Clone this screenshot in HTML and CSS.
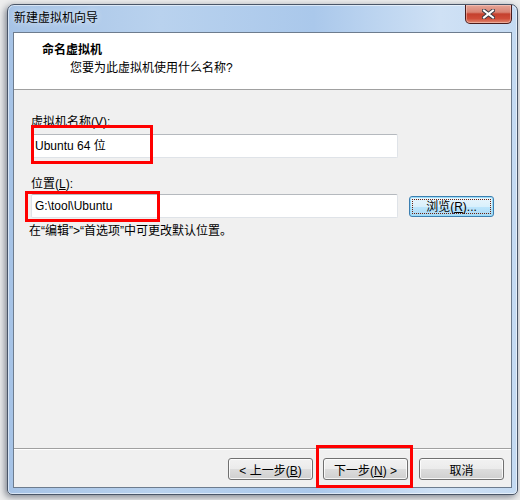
FILE: index.html
```html
<!DOCTYPE html>
<html lang="zh-CN">
<head>
<meta charset="UTF-8">
<title>新建虚拟机向导</title>
<link rel="stylesheet" href="styles.css">
</head>
<body>

<div class="window">
  <div class="titlebar">
    <span class="title">新建虚拟机向导</span>
    <button class="close" type="button">
      <svg width="13" height="10" viewBox="0 0 13 10">
        <path d="M2 1.5 L11 8.5 M11 1.5 L2 8.5" stroke="#3a3a44" stroke-width="4" stroke-linecap="square"/>
        <path d="M2 1.5 L11 8.5 M11 1.5 L2 8.5" stroke="#ffffff" stroke-width="2" stroke-linecap="square"/>
      </svg>
    </button>
  </div>

  <div class="client">
    <div class="header">
      <div class="head-title">命名虚拟机</div>
      <div class="head-sub">您要为此虚拟机使用什么名称?</div>
    </div>

    <div class="content">
      <label class="field-label first">虚拟机名称(<u>V</u>):</label>
      <div class="textbox">Ubuntu 64 位</div>

      <label class="field-label second">位置(<u>L</u>):</label>
      <div class="row">
        <div class="textbox">G:\tool\Ubuntu</div>
        <button class="btn browse" type="button"><span class="focus">浏览(<u>R</u>)...</span></button>
      </div>

      <p class="hint">在“编辑”&gt;“首选项”中可更改默认位置。</p>
    </div>

    <div class="footer">
      <button class="btn" type="button">&lt; 上一步(<u>B</u>)</button>
      <button class="btn" type="button">下一步(<u>N</u>) &gt;</button>
      <button class="btn cancel" type="button">取消</button>
    </div>
  </div>
</div>

<!-- red highlight boxes -->
<div class="mark mark-name"></div>
<div class="mark mark-path"></div>
<div class="mark mark-next"></div>

</body>
</html>
```

FILE: styles.css
```css
body {
  margin: 0;
  width: 520px;
  height: 500px;
  overflow: hidden;
  background: #eeeeee;
  font-family: "Liberation Sans", "Noto Sans CJK SC", sans-serif;
  font-size: 12px;
  color: #000;
  position: relative;
}

.window {
  box-sizing: border-box;
  width: 511px;
  height: 491px;
  margin: 4px 0 0 7px;
  padding: 0 5px 6px 5px;
  border: 1px solid #4a5668;
  border-radius: 7px 7px 5px 5px;
  background: linear-gradient(to right, #a6c3e6 0%, #b9d2ee 30%, #aac8eb 60%, #cfe1f5 85%, #c4daf2 100%);
  box-shadow: inset 0 0 0 1px rgba(255, 255, 255, 0.55), -2px 2px 7px rgba(30, 40, 60, 0.55);
  display: flex;
  flex-direction: column;
}

.titlebar {
  height: 27px;
  display: flex;
  justify-content: space-between;
  align-items: flex-start;
}

.title {
  padding: 5px 0 0 1px;
  line-height: 16px;
  text-shadow: 0 0 6px rgba(255, 255, 255, 0.9);
}

.close {
  width: 47px;
  height: 19px;
  margin-right: 0;
  padding: 0;
  border: 1px solid #4a1c1c;
  border-top: none;
  border-radius: 0 0 5px 5px;
  background: linear-gradient(#e6a597 0%, #d98474 40%, #c4402e 50%, #cf4c38 75%, #e08a72 100%);
  box-shadow: inset 0 0 0 1px rgba(255, 220, 210, 0.45);
  display: flex;
  align-items: center;
  justify-content: center;
}

.client {
  flex: 1;
  border: 1px solid #6d7c8e;
  background: #f0f0f0;
  display: flex;
  flex-direction: column;
}

.header {
  height: 57px;
  background: #fff;
  border-bottom: 1px solid #a0a0a0;
  padding-top: 9px;
  box-sizing: border-box;
  line-height: 16px;
}

.head-title {
  padding-left: 28px;
  font-weight: bold;
}

.head-sub {
  padding-left: 56px;
  margin-top: 2px;
}

.content {
  flex: 1;
  padding: 24px 0 0 17px;
}

.field-label {
  display: block;
  line-height: 16px;
}

.field-label.first {
  margin-bottom: 4px;
}

.field-label.second {
  margin-top: 18px;
  margin-bottom: 2px;
}

.textbox {
  box-sizing: border-box;
  width: 367px;
  height: 24px;
  padding-left: 3px;
  line-height: 22px;
  background: #fff;
  border: 1px solid #dfe3e8;
  border-top-color: #b5b9be;
  border-radius: 2px;
}

.row {
  display: flex;
  align-items: center;
}

.btn {
  box-sizing: border-box;
  width: 85px;
  height: 22px;
  padding: 0;
  font: inherit;
  color: #000;
  border: 1px solid #707070;
  border-radius: 3px;
  background: linear-gradient(#f2f2f2 0%, #ebebeb 50%, #dddddd 50%, #cfcfcf 100%);
  box-shadow: inset 0 0 0 1px rgba(255, 255, 255, 0.8);
}

.browse {
  margin-left: 11px;
  height: 21px;
  border-color: #3c7fb1;
  background: linear-gradient(#eaf6fd 0%, #d9f0fc 50%, #bee6fd 50%, #a7d9f5 100%);
  box-shadow: inset 0 0 0 1px #9cdcf7;
  display: flex;
  align-items: center;
  justify-content: center;
  padding: 2px;
}

.focus {
  display: block;
  width: 100%;
  height: 100%;
  box-sizing: border-box;
  line-height: 15px;
  border: 1px dotted #6b2410;
}

.hint {
  margin: 5px 0 0 -2px;
  line-height: 16px;
}

.footer {
  height: 39px;
  box-sizing: border-box;
  border-top: 1px solid #a0a0a0;
  box-shadow: inset 0 1px 0 #fff;
  padding: 9px 7px 0 0;
  display: flex;
  justify-content: flex-end;
  align-items: flex-start;
  gap: 10px;
}

.footer .cancel {
  margin-left: 1px;
}

.mark {
  position: absolute;
  box-sizing: border-box;
  border: 3px solid #f00;
}

.mark-name {
  left: 31px;
  top: 125px;
  width: 122px;
  height: 39px;
}

.mark-path {
  left: 25px;
  top: 191px;
  width: 135px;
  height: 31px;
}

.mark-next {
  left: 316px;
  top: 445px;
  width: 97px;
  height: 43px;
}
```
